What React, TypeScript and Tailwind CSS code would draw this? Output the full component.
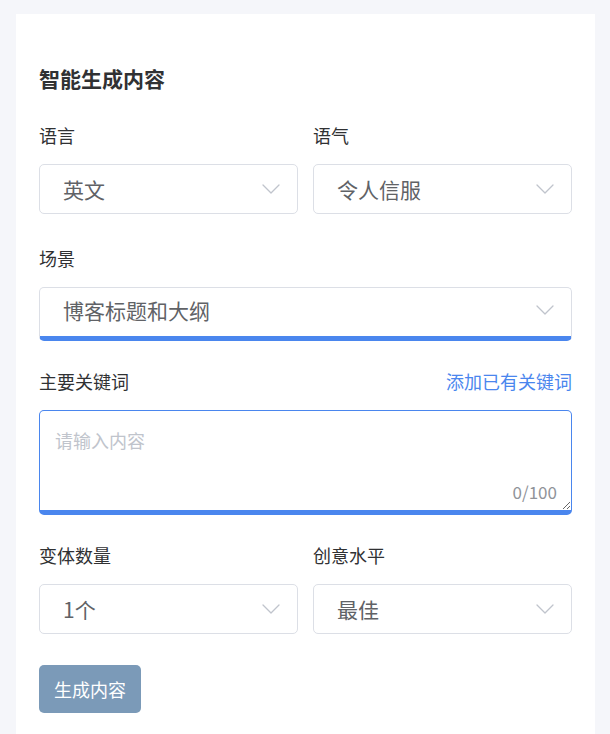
import React, { useState } from 'react';

const FONT = { fontFamily: '"Noto Sans CJK SC", "Noto Sans", "Liberation Sans", sans-serif' };

const Chevron = () => (
  <svg width="18" height="10" viewBox="0 0 18 10" fill="none" className="shrink-0">
    <polyline points="1,1 9,9 17,1" stroke="#c0c4cc" strokeWidth="1.3" strokeLinecap="round" strokeLinejoin="round" />
  </svg>
);

const FakeSelect = ({ value, active = false }: { value: string; active?: boolean }) => (
  <div
    className={
      active
        ? "flex items-center justify-between h-[54px] pl-[23px] pr-[17px] pb-[4px] rounded-[5px] border border-[#dcdfe6] border-b-[5px] border-b-[#4a86ee] bg-white"
        : "flex items-center justify-between h-[50px] pl-[23px] pr-[17px] rounded-[5px] border border-[#dcdfe6] bg-white"
    }
  >
    <span className="text-[21px] leading-[28px] text-[#606266]">{value}</span>
    <Chevron />
  </div>
);

const Label = ({ children }: { children: React.ReactNode }) => (
  <div className="text-[18px] leading-[24px] text-[#303133]">{children}</div>
);

const App = () => {
  const [keyword, setKeyword] = useState('');

  return (
    <div className="min-h-screen bg-[#f5f6fa] pt-[14px] pl-[16px] pr-[15px]" style={FONT}>
      <div className="bg-white min-h-[720px] px-[23px] pt-[52px] pb-[20px]">
        <h1 className="text-[21px] leading-[24px] font-bold text-[#303133]">智能生成内容</h1>

        {/* 语言 / 语气 */}
        <div className="grid grid-cols-2 gap-x-[15px] mt-[33px]">
          <div>
            <Label>语言</Label>
            <div className="mt-[17px]">
              <FakeSelect value="英文" />
            </div>
          </div>
          <div>
            <Label>语气</Label>
            <div className="mt-[17px]">
              <FakeSelect value="令人信服" />
            </div>
          </div>
        </div>

        {/* 场景 */}
        <div className="mt-[32px]">
          <Label>场景</Label>
          <div className="mt-[17px]">
            <FakeSelect value="博客标题和大纲" active />
          </div>
        </div>

        {/* 主要关键词 */}
        <div className="mt-[28px]">
          <div className="flex items-center justify-between">
            <Label>主要关键词</Label>
            <a className="text-[18px] leading-[24px] text-[#4a86ee] cursor-pointer">添加已有关键词</a>
          </div>
          <div className="relative mt-[17px]">
            <textarea
              value={keyword}
              onChange={(e) => setKeyword(e.target.value)}
              placeholder="请输入内容"
              maxLength={100}
              className="block w-full h-[105px] resize-y rounded-[5px] border border-[#4a86ee] border-b-[5px] px-[15px] pt-[17px] text-[18px] leading-[24px] text-[#606266] placeholder:text-[#c0c4cc] outline-none"
              style={FONT}
            />
            <span className="absolute right-[15px] bottom-[12px] text-[17px] leading-[22px] text-[#909399]">
              {keyword.length}/100
            </span>
          </div>
        </div>

        {/* 变体数量 / 创意水平 */}
        <div className="grid grid-cols-2 gap-x-[15px] mt-[28px]">
          <div>
            <Label>变体数量</Label>
            <div className="mt-[17px]">
              <FakeSelect value="1个" />
            </div>
          </div>
          <div>
            <Label>创意水平</Label>
            <div className="mt-[17px]">
              <FakeSelect value="最佳" />
            </div>
          </div>
        </div>

        <button className="mt-[31px] h-[48px] w-[102px] rounded-[5px] bg-[#7b9ab8] text-white text-[18px]">
          生成内容
        </button>
      </div>
    </div>
  );
};

export default App;
